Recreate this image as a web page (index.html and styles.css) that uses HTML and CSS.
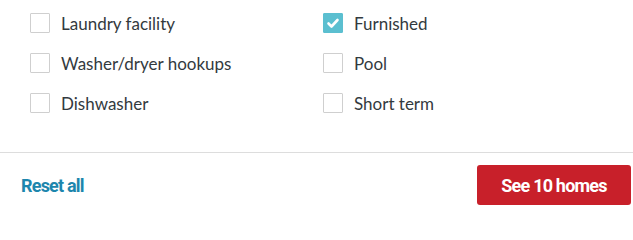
FILE: index.html
```html
<!DOCTYPE html>
<html lang="en">
<head>
<meta charset="utf-8">
<link rel="stylesheet" href="styles.css">
</head>
<body>
<div class="panel">
  <div class="options">
    <label class="option"><span class="box"></span><span class="text">Laundry facility</span></label>
    <label class="option"><span class="box checked"><svg viewBox="0 0 20 20" width="20" height="20"><path d="M5.5 10.5 L8.5 13.5 L14.5 7" fill="none" stroke="#fff" stroke-width="2.6" stroke-linecap="round" stroke-linejoin="round"/></svg></span><span class="text">Furnished</span></label>
    <label class="option"><span class="box"></span><span class="text">Washer/dryer hookups</span></label>
    <label class="option"><span class="box"></span><span class="text">Pool</span></label>
    <label class="option"><span class="box"></span><span class="text">Dishwasher</span></label>
    <label class="option"><span class="box"></span><span class="text">Short term</span></label>
  </div>
  <div class="footer">
    <a class="reset">Reset all</a>
    <button class="see">See 10 homes</button>
  </div>
</div>
</body>
</html>
```
FILE: styles.css
```css
html, body {
  margin: 0;
  padding: 0;
  background: #fff;
}
.panel {
  width: 633px;
  height: 211px;
  display: flex;
  flex-direction: column;
}
.options {
  display: grid;
  grid-template-columns: 293px 293px;
  row-gap: 20px;
  padding: 13px 30px 0 30px;
  height: 152px;
  box-sizing: border-box;
  align-content: start;
}
.option {
  display: flex;
  align-items: center;
  height: 20px;
  gap: 11px;
  font-family: Lato, "Noto Sans", sans-serif;
  font-size: 17px;
  color: #333a3e;
}
.box {
  width: 20px;
  height: 20px;
  box-sizing: border-box;
  border: 1px solid #cfcfcf;
  border-radius: 1px;
  flex: none;
  display: flex;
}
.box.checked {
  background: #5bbfd0;
  border-color: #5bbfd0;
}
.box.checked svg {
  margin: -1px;
}
.footer {
  border-top: 1px solid #dddddd;
  display: flex;
  align-items: center;
  justify-content: space-between;
  padding: 12px 2px 6px 21px;
}
.reset {
  font-family: Roboto, "Liberation Sans", sans-serif;
  font-weight: bold;
  font-size: 18px;
  letter-spacing: -0.8px;
  color: #1d86ad;
  cursor: pointer;
}
.see {
  width: 154px;
  height: 40px;
  border: none;
  border-radius: 3px;
  background: #c8202a;
  color: #fff;
  font-family: Roboto, "Liberation Sans", sans-serif;
  font-weight: bold;
  font-size: 18px;
  letter-spacing: -0.8px;
  padding: 0;
}
```
